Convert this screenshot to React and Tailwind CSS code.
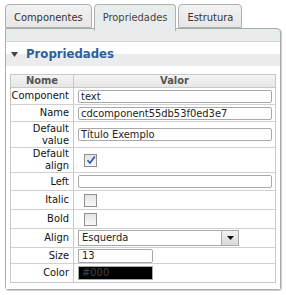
const rows = [
  { label: 'Component', h: 'h-[17px]', type: 'text', value: 'text' },
  { label: 'Name', h: 'h-[17px]', type: 'text', value: 'cdcomponent55db53f0ed3e7' },
  { label: ['Default', 'value'], h: 'h-[26px]', type: 'text', value: 'Título Exemplo' },
  { label: ['Default', 'align'], h: 'h-[25px]', type: 'check', checked: true },
  { label: 'Left', h: 'h-[18px]', type: 'text', value: '' },
  { label: 'Italic', h: 'h-[19px]', type: 'check' },
  { label: 'Bold', h: 'h-[19px]', type: 'check' },
  { label: 'Align', h: 'h-[19px]', type: 'select', value: 'Esquerda' },
  { label: 'Size', h: 'h-[16px]', type: 'small', value: '13' },
  { label: 'Color', h: 'h-[18px]', type: 'color', value: '#000' },
]

const Checkbox = ({ checked }) => (
  <div className="w-[13px] h-[13px] border border-[#8f8f8f] bg-gradient-to-b from-[#e4e4e4] to-[#f8f8f8] flex items-center justify-center">
    {checked && (
      <svg width="10" height="10" viewBox="0 0 10 10">
        <path d="M1.5 5.2 L4 8 L8.8 1.5" fill="none" stroke="#2f4fa8" strokeWidth="1.6" />
      </svg>
    )}
  </div>
)

const Field = ({ row }) => {
  if (row.type === 'check') return <div className="pl-[10px]"><Checkbox checked={row.checked} /></div>
  if (row.type === 'select')
    return (
      <div className="ml-[4px] w-[161px] h-[16px] border border-[#a9a9a9] bg-white flex items-center justify-between pl-[3px]">
        <span>{row.value}</span>
        <div className="w-[17px] h-[14px] border-l border-[#a9a9a9] bg-gradient-to-b from-[#f1f1f1] to-[#d9d9d9] flex items-center justify-center">
          <svg width="7" height="4" viewBox="0 0 7 4"><path d="M0 0 H7 L3.5 4 Z" fill="#111" /></svg>
        </div>
      </div>
    )
  if (row.type === 'small')
    return <div className="ml-[4px] w-[75px] h-[14px] border border-[#a9a9a9] rounded-r-[2px] bg-white pl-[3px] leading-[12px]">{row.value}</div>
  if (row.type === 'color')
    return <div className="ml-[4px] w-[75px] h-[14px] border border-[#a9a9a9] bg-black text-[#444] pl-[3px] leading-[12px]">{row.value}</div>
  return <div className="ml-[4px] mr-[3px] h-[13px] border border-[#a9a9a9] rounded-[2px] bg-white pl-[2px] leading-[11px]">{row.value}</div>
}

export default function App() {
  return (
    <div className="w-[286px] h-[295px] bg-white pt-[4px] px-[5px] text-[11px] text-[#222] font-stretch-condensed" style={{ fontFamily: '"DejaVu Sans Condensed", "DejaVu Sans", Verdana, sans-serif' }}>
      {/* tabs */}
      <div className="flex gap-[2px] h-[24px] items-end">
        <div className="h-[24px] px-[8px] pt-[5px] border border-[#b0b0b0] rounded-t-[4px] bg-gradient-to-b from-[#f2f2f2] to-[#e6e6e6] text-[#333]">Componentes</div>
        <div className="h-[27px] -mb-[3px] z-10 px-[8px] pt-[5px] border border-b-0 border-[#b0b0b0] rounded-t-[4px] bg-[#e9eced] text-[#444]">Propriedades</div>
        <div className="h-[24px] px-[8px] pt-[5px] border border-[#b0b0b0] rounded-t-[4px] bg-gradient-to-b from-[#f2f2f2] to-[#e6e6e6] text-[#333]">Estrutura</div>
      </div>
      {/* panel */}
      <div className="h-[262px] border border-[#aaaaaa] rounded-tr-[4px] rounded-b-[3px] bg-[#e9eced] pt-[12px] shadow-[1px_1px_0_#d0d0d0]">
        <div className="h-[248px] bg-white border-t border-[#d6d6d6]">
          <div className="h-[24px] flex items-center gap-[8px] pl-[5px] bg-gradient-to-b from-white from-50% to-[#ececec] to-50%">
            <svg width="7" height="5" viewBox="0 0 7 5"><path d="M0 0 H7 L3.5 5 Z" fill="#444" /></svg>
            <span className="text-[13px] font-bold text-[#2e5e9c]">Propriedades</span>
          </div>
          <div className="pt-[8px] px-[4px]">
            <div className="border border-[#c8c8c8]">
              <div className="flex h-[13px] border-b border-[#c8c8c8] bg-gradient-to-b from-[#f4f4f4] to-[#e6e6e6] font-bold text-[#555] leading-[12px]">
                <div className="w-[63px] border-r border-[#c8c8c8] text-center">Nome</div>
                <div className="flex-1 text-center">Valor</div>
              </div>
              {rows.map((row, i) => (
                <div key={i} className={`flex ${row.h} ${i < rows.length - 1 ? 'border-b border-[#d0d0d0]' : ''}`}>
                  <div className="w-[63px] shrink-0 border-r border-[#c8c8c8] flex flex-col justify-center items-end pr-[4px] leading-[12px] text-[#111]">
                    {Array.isArray(row.label) ? row.label.map((l) => <span key={l}>{l}</span>) : <span>{row.label}</span>}
                  </div>
                  <div className="flex-1 flex flex-col justify-center">
                    <Field row={row} />
                  </div>
                </div>
              ))}
            </div>
          </div>
        </div>
      </div>
    </div>
  )
}
